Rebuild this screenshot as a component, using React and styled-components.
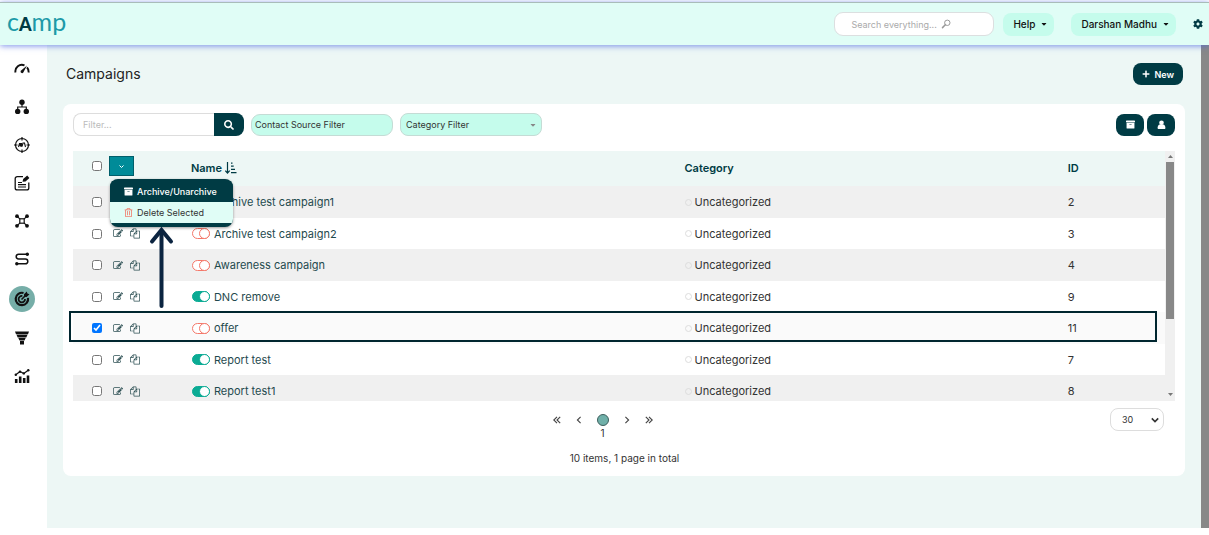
import React, { useState } from "react"
import styled, { createGlobalStyle } from "styled-components"
import {
  FaArchive,
  FaCaretDown,
  FaCog,
  FaPlus,
  FaRegTrashAlt,
  FaSearch
} from "react-icons/fa"

const GlobalStyle = createGlobalStyle`
  :root {
    --dark: #003b44;
    --teal: #008b98;
    --mint: #c5fcec;
    --pale: #e0fdf6;
    --surface: #edf7f5;
    --stripe: #f0f0f0;
    --ink: #333;
  }

  *,
  *::before,
  *::after {
    box-sizing: border-box;
  }

  body {
    margin: 0;
    background: #fff;
    color: var(--ink);
    font-family: Inter, "Liberation Sans", sans-serif;
    font-size: 11px;
  }

  button, input, select {
    margin: 0;
    font-family: inherit;
  }
`

const Page = styled.div`
  min-height: 100vh;
  padding: 2px 0 7px;
  display: flex;
  flex-direction: column;
`

const TopBar = styled.header`
  position: relative;
  z-index: 2;
  height: 43px;
  padding: 0 6px 0 7px;
  display: flex;
  align-items: center;
  border-top: 1px solid #a9bcb9;
  background: var(--pale);
  box-shadow: 0 1px 6px rgba(70, 100, 225, 0.7);
`

const Logo = styled.a`
  margin-right: auto;
  padding-bottom: 3px;
  color: #1d9aa8;
  font-family: Lato, sans-serif;
  font-size: 25px;
  line-height: 30px;
  text-decoration: none;

  b {
    color: var(--dark);
    font-size: 18px;
    font-weight: 900;
  }
`

const SearchBox = styled.label`
  position: relative;
  width: 160px;
  margin-right: 9px;
  color: #999;

  input {
    display: block;
    width: 100%;
    height: 24px;
    padding: 0 16px;
    border: 1px solid #dcdfe0;
    border-radius: 9px;
    background: #fff;
    font-size: 9px;
  }

  input::placeholder {
    color: #aaa;
  }

  svg {
    position: absolute;
    top: 7px;
    left: 107px;
  }
`

const TopButton = styled.button`
  height: 23px;
  margin-right: 17px;
  padding: 0 6px 0 10px;
  display: flex;
  align-items: center;
  gap: 5px;
  border: none;
  border-radius: 8px;
  background: var(--mint);
  color: #111;
  font-size: 10px;
  font-weight: 500;
`

const IconButton = styled.button`
  padding: 0;
  display: flex;
  border: none;
  background: transparent;
  color: var(--dark);
`

const Body = styled.div`
  flex: 1;
  display: flex;
`

const SideBar = styled.nav`
  width: 47px;
  padding-top: 5px;
  display: flex;
  flex-direction: column;
  background: #fff;
`

const SideLink = styled.a`
  width: 44px;
  height: ${props => (props.$active ? "41px" : "38px")};
  display: flex;
  align-items: center;
  justify-content: center;
  color: #111;

  span {
    width: 26px;
    height: 26px;
    display: flex;
    align-items: center;
    justify-content: center;
    border-radius: 50%;
    background: ${props => (props.$active ? "#76aea8" : "transparent")};
  }
`

const Main = styled.main`
  flex: 1;
  padding: 18px 16px;
  background: var(--surface);
`

const PageScroll = styled.div`
  width: 8px;
  background: #888;
`

const Heading = styled.div`
  margin-bottom: 19px;
  padding: 0 2px 0 3px;
  display: flex;
  align-items: center;
  justify-content: space-between;

  h1 {
    margin: 0;
    color: #222;
    font-size: 14px;
    font-weight: 400;
    line-height: 22px;
  }
`

const DarkButton = styled.button`
  min-width: 28px;
  height: 22px;
  padding: 0 9px;
  display: flex;
  align-items: center;
  justify-content: center;
  gap: 4px;
  border: none;
  border-radius: ${props => (props.$joined ? "0 8px 8px 0" : "8px")};
  background: var(--dark);
  color: #fff;
  font-size: 9px;
  font-weight: 600;

  svg {
    flex: none;
  }
`

const Card = styled.section`
  padding: 9px 10px 11px;
  border-radius: 8px;
  background: #fff;
`

const Toolbar = styled.div`
  margin-bottom: 15px;
  display: flex;
  align-items: center;
  gap: 7px;
`

const FilterGroup = styled.div`
  display: flex;

  input {
    width: 141px;
    height: 23px;
    padding: 0 9px;
    border: 1px solid #ddd;
    border-right: none;
    border-radius: 8px 0 0 8px;
    font-size: 9px;
  }

  input::placeholder {
    color: #bbb;
  }

  button {
    width: 30px;
    height: 23px;
  }
`

const SourceFilter = styled.input`
  width: 142px;
  height: 22px;
  padding: 0 3px;
  border: 1px solid #c4dcd5;
  border-radius: 9px;
  background: var(--mint);
  font-size: 9px;

  &::placeholder {
    color: var(--ink);
  }
`

const SelectBox = styled.div`
  position: relative;
  width: ${props => props.$width}px;

  select {
    width: 100%;
    height: 23px;
    padding: 0 ${props => (props.$mint ? 5 : 11)}px;
    appearance: none;
    border: 1px solid ${props => (props.$mint ? "#c4dcd5" : "#ddd")};
    border-radius: 8px;
    background: ${props => (props.$mint ? "var(--mint)" : "#fff")};
    color: var(--ink);
    font-size: 9px;
  }

  svg {
    position: absolute;
    top: 8px;
    right: 5px;
    pointer-events: none;
  }
`

const ToolActions = styled.div`
  margin-left: auto;
  display: flex;
  gap: 3px;
`

const TableArea = styled.div`
  position: relative;
  display: flex;
`

const TableView = styled.div`
  flex: 1;
  max-height: 250px;
  overflow: hidden;
`

const Table = styled.table`
  width: 100%;
  table-layout: fixed;
  border-collapse: collapse;
  text-align: left;

  th,
  td {
    padding: 0;
    white-space: nowrap;
  }

  th {
    height: 35px;
    padding-bottom: 2px;
    background: var(--surface);
    color: var(--dark);
    font-weight: 600;
  }

  th svg {
    vertical-align: -2px;
  }
`

const Col = styled.col`
  width: ${props => props.$width};
`

const Row = styled.tr`
  height: 31px;
  background: #fff;

  &:nth-child(odd) {
    height: 32px;
    background: ${props => (props.$selected ? "#fafafa" : "var(--stripe)")};
  }
`

const Tools = styled.div`
  position: relative;
  padding-left: 19px;
  padding-bottom: ${props => (props.$head ? "3px" : "0")};
  display: flex;
  align-items: center;
  gap: 7px;

  input {
    width: 10px;
    height: 10px;
    margin-right: 4px;
  }
`

const RowButton = styled(IconButton)`
  width: 10px;
  color: #2c4f53;
`

const MenuButton = styled.button`
  width: 25px;
  height: 20px;
  margin-left: -4px;
  padding: 0;
  display: flex;
  align-items: center;
  justify-content: center;
  border: 1px solid #005f6b;
  background: var(--teal);
  color: #fff;
`

const Menu = styled.div`
  position: absolute;
  z-index: 1;
  top: 23px;
  left: 37px;
  width: 123px;
  padding: 2px 0 4px;
  overflow: hidden;
  border-radius: 8px;
  background: var(--dark);
  box-shadow: 0 1px 3px rgba(0, 0, 0, 0.4);
`

const MenuItem = styled.button`
  width: 100%;
  height: 21px;
  padding: 0 14px;
  display: flex;
  align-items: center;
  gap: 4px;
  border: none;
  background: ${props => (props.$hover ? "var(--pale)" : "var(--dark)")};
  color: ${props => (props.$hover ? "var(--ink)" : "#fff")};
  font-size: 9px;
  font-weight: ${props => (props.$hover ? 400 : 500)};

  svg {
    flex: none;
    width: 9px;
    color: ${props => (props.$hover ? "#f08070" : "#fff")};
  }
`

const NameCell = styled.div`
  padding-left: 1px;
  display: flex;
  align-items: center;
  gap: 4px;

  a {
    color: #1f4a4e;
    text-decoration: none;
  }
`

const Toggle = styled.input`
  appearance: none;
  position: relative;
  width: 18px;
  height: 11px;
  border: 1px solid ${props => (props.checked ? "#0bab94" : "#f4786a")};
  border-radius: 6px;
  background: ${props => (props.checked ? "#0bab94" : "#fff")};

  &::after {
    content: "";
    position: absolute;
    top: -1px;
    right: -1px;
    width: 11px;
    height: 11px;
    border: 1px solid ${props => (props.checked ? "#0bab94" : "#f4786a")};
    border-radius: 50%;
    background: #fff;
  }
`

const Category = styled.span`
  display: flex;
  align-items: center;
  gap: 3px;

  &::before {
    content: "";
    width: 7px;
    height: 7px;
    border: 1px solid #ddd;
    border-radius: 50%;
  }
`

const ScrollRail = styled.div`
  width: 10px;
  padding: 4px 0 5px;
  display: flex;
  flex-direction: column;
  align-items: center;
  background: var(--stripe);
  color: #777;

  div {
    width: 8px;
    height: 157px;
    margin: 4px 0 auto;
    background: #888;
  }
`

// frame drawn round the selected row
const Spotlight = styled.div`
  position: absolute;
  top: 160px;
  left: -4px;
  right: 18px;
  height: 31px;
  border: 2px solid #00262f;
  pointer-events: none;
`

const Pointer = styled.svg`
  position: absolute;
  z-index: 2;
  top: 75px;
  left: 76px;
  pointer-events: none;
`

const Footer = styled.footer`
  padding: 7px 11px 0 0;
  display: grid;
  grid-template-columns: 54px 1fr 54px;
  align-items: start;
`

const Pager = styled.div`
  grid-column: 2;
  padding-left: 12px;
  display: flex;
  flex-direction: column;
  align-items: center;
  color: var(--ink);
  font-size: 10px;
  line-height: 14px;
`

const PageButtons = styled.div`
  height: 32px;
  margin-bottom: 11px;
  padding-right: 44px;
  display: flex;
  gap: 14px;

  button {
    height: 24px;
    align-items: center;
    color: #444;
  }
`

const CurrentPage = styled.span`
  padding-top: 6px;
  display: flex;
  flex-direction: column;
  align-items: center;
  line-height: 14px;

  &::before {
    content: "";
    width: 12px;
    height: 12px;
    border: 1px solid #3d5f5d;
    border-radius: 50%;
    background: #70b0a9;
  }
`

const PencilSquare = () => (
  <svg width="11" height="11" viewBox="0 0 1792 1792" fill="currentColor">
    <path d="M888 1184l116-116-152-152-116 116v56h96v96h56zm440-720q-16-16-33 1l-350 350q-17 17-1 33t33-1l350-350q17-17 1-33zm80 594v190q0 119-84.5 203.5t-203.5 84.5h-832q-119 0-203.5-84.5t-84.5-203.5v-832q0-119 84.5-203.5t203.5-84.5h832q63 0 117 25 15 7 18 23 3 17-9 29l-49 49q-14 14-32 8-23-6-45-6h-832q-66 0-113 47t-47 113v832q0 66 47 113t113 47h832q66 0 113-47t47-113v-126q0-13 9-22l64-64q15-15 35-7t20 29zm-96-738l288 288-672 672h-288v-288zm444 132l-92 92-288-288 92-92q28-28 68-28t68 28l152 152q28 28 28 68t-28 68z" />
  </svg>
)

const Files = () => (
  <svg width="11" height="11" viewBox="0 0 1792 1792" fill="currentColor">
    <path d="M1696 384q40 0 68 28t28 68v1216q0 40-28 68t-68 28h-960q-40 0-68-28t-28-68v-288h-544q-40 0-68-28t-28-68v-672q0-40 20-88t48-76l408-408q28-28 76-48t88-20h416q40 0 68 28t28 68v328q68-40 128-40h416zm-544 213l-299 299h299v-299zm-640-384l-299 299h299v-299zm196 647l316-316v-416h-384v416q0 40-28 68t-68 28h-416v640h512v-256q0-40 20-88t48-76zm956 804v-1152h-384v416q0 40-28 68t-68 28h-416v640h896z" />
  </svg>
)

const SortIcon = () => (
  <svg width="12" height="12" viewBox="0 0 12 12" fill="none" stroke="currentColor">
    <path d="M2.5 0v11M0.3 8.6l2.2 2.4 2.2-2.4" strokeWidth="1.2" />
    <path d="M6 1.2h1.5M6 4.2h2.7M6 7.4h4M6 10.6h5.5" strokeWidth="1.3" />
  </svg>
)

const Person = () => (
  <svg width="9" height="10" viewBox="0 0 9 10" fill="currentColor">
    <circle cx="4.5" cy="2.8" r="2.3" />
    <path d="M2.6 4.4C1 5 .6 6.6.6 8.1c0 .6.4 1 1 1h5.8c.6 0 1-.4 1-1 0-1.500-.4-3.100-2-3.700z" />
  </svg>
)

const Loupe = () => (
  <svg width="11" height="10" viewBox="0 0 11 10" fill="none" stroke="currentColor">
    <circle cx="6.300" cy="3.800" r="2.700" />
    <path d="M4.300 5.800L1.500 8.600" strokeWidth="1.500" strokeLinecap="round" />
  </svg>
)

const Chevron = ({ size = 5, d = "M1 3l4 4 4-4", weight = 2 }) => (
  <svg width={size} height={size} viewBox="0 0 10 10" fill="none" stroke="currentColor" strokeWidth={weight}>
    <path d={d} />
  </svg>
)

const SideIcon = ({ children }) => (
  <svg width="16" height="16" viewBox="0 0 16 16" fill="none" stroke="currentColor" strokeWidth="1.2">
    {children}
  </svg>
)

const sideItems = [
  {
    label: "Dashboard",
    icon: (
      <>
        <path d="M1.500 11.500A6.500 6.500 0 0 1 10.500 4.300M13 6.300a6.500 6.500 0 0 1 1.500 5.200" strokeWidth="1.900" />
        <path d="M13 4.500L9.300 11.400a1.500 1.500 0 1 1-2.500-1.700z" fill="currentColor" stroke="none" />
      </>
    )
  },
  {
    label: "Hierarchy",
    icon: (
      <>
        <g fill="currentColor" stroke="none">
          <circle cx="8" cy="3.200" r="2.700" />
          <circle cx="3.700" cy="12.400" r="2.700" />
          <circle cx="12.300" cy="12.400" r="2.700" />
        </g>
        <path d="M8 5v3M3.700 10V8h8.600v2" />
      </>
    )
  },
  {
    label: "Targets",
    icon: (
      <>
        <circle cx="8" cy="8" r="6.500" strokeWidth="1.200" />
        <path d="M8 0v3.500M8 12.500V16M0 8h3.500M12.500 8H16" />
        <path d="M4.500 10l1-3.500h2L7 10M8 9.500l1-3.500h1.500l1 4" strokeWidth="1.100" />
        <circle cx="6.300" cy="8" r="1.200" fill="currentColor" stroke="none" />
      </>
    )
  },
  {
    label: "Forms",
    icon: (
      <>
        <path d="M9 1.600H3.200a2 2 0 0 0-2 2v9.300a2 2 0 0 0 2 2h9.600a2 2 0 0 0 2-2V7.500" strokeWidth="1.300" />
        <path d="M4 7.500h4M4 9.700h8M4 12h8" />
        <path d="M8.500 6.800L9.200 4l4-3.400L15.400 3l-3.900 3.500z" fill="currentColor" stroke="none" />
      </>
    )
  },
  {
    label: "Segments",
    icon: (
      <>
        <g fill="currentColor" stroke="none">
          <circle cx="3" cy="3.200" r="1.900" />
          <circle cx="13" cy="3.200" r="1.900" />
          <circle cx="3" cy="12.800" r="1.900" />
          <circle cx="13" cy="12.800" r="1.900" />
        </g>
        <path d="M3 3.200l3 3M13 3.200l-3 3M3 12.800l3-3M13 12.800l-3-3" />
        <rect x="5.800" y="5.800" width="4.400" height="4.400" />
      </>
    )
  },
  {
    label: "Journeys",
    icon: (
      <>
        <path d="M13 3.200H4.600a2.400 2.400 0 0 0 0 4.800h6.800a2.400 2.400 0 0 1 0 4.800H3" strokeWidth="1.500" />
        <circle cx="13.300" cy="3.200" r="1.700" fill="currentColor" stroke="none" />
        <circle cx="2.800" cy="12.800" r="1.700" fill="currentColor" stroke="none" />
      </>
    )
  },
  {
    label: "Campaigns",
    active: true,
    icon: (
      <>
        <path d="M9.500 2A6.200 6.200 0 1 0 14 6.900" strokeWidth="2.200" />
        <path d="M8.300 5A3.200 3.200 0 1 0 11 8" strokeWidth="1.800" />
        <path d="M7.500 8.500l4-4" strokeWidth="1.600" />
        <path d="M10 5.800V3.300L12.800.5l.6 2.100 2.100.6-2.800 2.800z" fill="currentColor" stroke="none" />
      </>
    )
  },
  {
    label: "Funnels",
    icon: (
      <g fill="currentColor" stroke="none">
        <path d="M1 1.500h14l-1 2.700H2zM2.500 4.800h11l-1.200 2.700H3.700zM4.300 8.100h7.400l-1.200 2.400h-5zM6 11.100h4V14.500H6z" />
      </g>
    )
  },
  {
    label: "Reports",
    icon: (
      <>
        <path d="M2.200 15v-4M6.200 15V8.500M10.200 15v-5M14 15V7.500" strokeWidth="2.600" />
        <path d="M1.500 7L6 3.500l3.800 2L14.500 2" />
        <g fill="currentColor" stroke="none">
          <circle cx="1.800" cy="6.800" r="1.200" />
          <circle cx="6" cy="3.700" r="1.200" />
          <circle cx="9.800" cy="5.400" r="1.200" />
          <circle cx="14.300" cy="2.200" r="1.200" />
        </g>
      </>
    )
  }
]

const initialRows = [
  { id: 2, name: "Archive test campaign1", live: false },
  { id: 3, name: "Archive test campaign2", live: false },
  { id: 4, name: "Awareness campaign", live: false },
  { id: 9, name: "DNC remove", live: true },
  { id: 11, name: "offer", live: false },
  { id: 7, name: "Report test", live: true },
  { id: 8, name: "Report test1", live: true }
]

function BulkMenu() {
  const [open, setOpen] = useState(true)

  return (
    <Tools $head>
      <input type="checkbox" aria-label="Select all" />
      <MenuButton aria-label="Bulk actions" onClick={() => setOpen(!open)}>
        <Chevron size={5} />
      </MenuButton>
      {open && (
        <Menu>
          <MenuItem>
            <FaArchive /> Archive/Unarchive
          </MenuItem>
          <MenuItem $hover>
            <FaRegTrashAlt /> Delete Selected
          </MenuItem>
        </Menu>
      )}
    </Tools>
  )
}

function CampaignTable() {
  const [rows, setRows] = useState(initialRows)
  const [selected, setSelected] = useState([11])

  function toggleLive(id) {
    setRows(rows.map(row => (row.id === id ? { ...row, live: !row.live } : row)))
  }

  function toggleSelected(id) {
    setSelected(
      selected.includes(id) ? selected.filter(item => item !== id) : [...selected, id]
    )
  }

  return (
    <TableArea>
      <TableView>
        <Table>
          <colgroup>
            <Col $width="10.8%" />
            <Col $width="45.2%" />
            <Col $width="35.1%" />
            <Col $width="8.9%" />
          </colgroup>
          <thead>
            <tr>
              <th>
                <BulkMenu />
              </th>
              <th>
                Name <SortIcon />
              </th>
              <th>Category</th>
              <th>ID</th>
            </tr>
          </thead>
          <tbody>
            {rows.map(({ id, name, live }) => (
              <Row key={id} $selected={selected.includes(id)}>
                <td>
                  <Tools>
                    <input
                      type="checkbox"
                      aria-label={`Select ${name}`}
                      checked={selected.includes(id)}
                      onChange={() => toggleSelected(id)}
                    />
                    <RowButton aria-label={`Edit ${name}`}>
                      <PencilSquare />
                    </RowButton>
                    <RowButton aria-label={`Clone ${name}`}>
                      <Files />
                    </RowButton>
                  </Tools>
                </td>
                <td>
                  <NameCell>
                    <Toggle
                      type="checkbox"
                      aria-label={`Publish ${name}`}
                      checked={live}
                      onChange={() => toggleLive(id)}
                    />
                    <a href="#campaign">{name}</a>
                  </NameCell>
                </td>
                <td>
                  <Category>Uncategorized</Category>
                </td>
                <td>{id}</td>
              </Row>
            ))}
          </tbody>
        </Table>
      </TableView>
      <ScrollRail>
        <svg width="5" height="3" viewBox="0 0 5 3" fill="currentColor">
          <path d="M0 3L2.500 0 5 3z" />
        </svg>
        <div />
        <svg width="5" height="3" viewBox="0 0 5 3" fill="currentColor">
          <path d="M0 0l2.500 3L5 0z" />
        </svg>
      </ScrollRail>
      <Spotlight />
      <Pointer width="26" height="84" viewBox="0 0 26 84" fill="none" stroke="#0b2440">
        <path d="M12.500 80V6" strokeWidth="4" strokeLinecap="round" />
        <path d="M3 15.500L12.500 4 22 15.500" strokeWidth="4" strokeLinecap="round" />
      </Pointer>
    </TableArea>
  )
}

function App() {
  return (
    <Page>
      <GlobalStyle />
      <TopBar>
        <Logo href="#home">
          c<b>A</b>mp
        </Logo>
        <SearchBox>
          <input type="search" aria-label="Search everything" placeholder="Search everything..." />
          <Loupe />
        </SearchBox>
        <TopButton>
          Help <FaCaretDown size={8} />
        </TopButton>
        <TopButton>
          Darshan Madhu <FaCaretDown size={8} />
        </TopButton>
        <IconButton aria-label="Settings">
          <FaCog size={10} />
        </IconButton>
      </TopBar>
      <Body>
        <SideBar>
          {sideItems.map(({ label, icon, active }) => (
            <SideLink key={label} href="#section" aria-label={label} $active={active}>
              <span>
                <SideIcon>{icon}</SideIcon>
              </span>
            </SideLink>
          ))}
        </SideBar>
        <Main>
          <Heading>
            <h1>Campaigns</h1>
            <DarkButton>
              <FaPlus size={8} /> New
            </DarkButton>
          </Heading>
          <Card>
            <Toolbar>
              <FilterGroup>
                <input aria-label="Filter" placeholder="Filter..." />
                <DarkButton $joined aria-label="Apply filter">
                  <FaSearch size={10} />
                </DarkButton>
              </FilterGroup>
              <SourceFilter aria-label="Contact source filter" placeholder="Contact Source Filter" />
              <SelectBox $mint $width={142}>
                <select aria-label="Category filter">
                  <option>Category Filter</option>
                </select>
                <FaCaretDown size={8} color="#888" />
              </SelectBox>
              <ToolActions>
                <DarkButton aria-label="Archived">
                  <FaArchive size={9} />
                </DarkButton>
                <DarkButton aria-label="Owner">
                  <Person />
                </DarkButton>
              </ToolActions>
            </Toolbar>
            <CampaignTable />
            <Footer>
              <Pager>
                <PageButtons>
                  <IconButton aria-label="First page">
                    <Chevron size={8} d="M5 1L1 5l4 4M9 1L5 5l4 4" weight={1.4} />
                  </IconButton>
                  <IconButton aria-label="Previous page">
                    <Chevron size={8} d="M7 1L3 5l4 4" weight={1.4} />
                  </IconButton>
                  <CurrentPage>1</CurrentPage>
                  <IconButton aria-label="Next page">
                    <Chevron size={8} d="M3 1l4 4-4 4" weight={1.4} />
                  </IconButton>
                  <IconButton aria-label="Last page">
                    <Chevron size={8} d="M1 1l4 4-4 4M5 1l4 4-4 4" weight={1.4} />
                  </IconButton>
                </PageButtons>
                10 items, 1 page in total
              </Pager>
              <SelectBox $width={54}>
                <select aria-label="Items per page">
                  <option>30</option>
                </select>
                <Chevron size={8} />
              </SelectBox>
            </Footer>
          </Card>
        </Main>
        <PageScroll />
      </Body>
    </Page>
  )
}

export default App
